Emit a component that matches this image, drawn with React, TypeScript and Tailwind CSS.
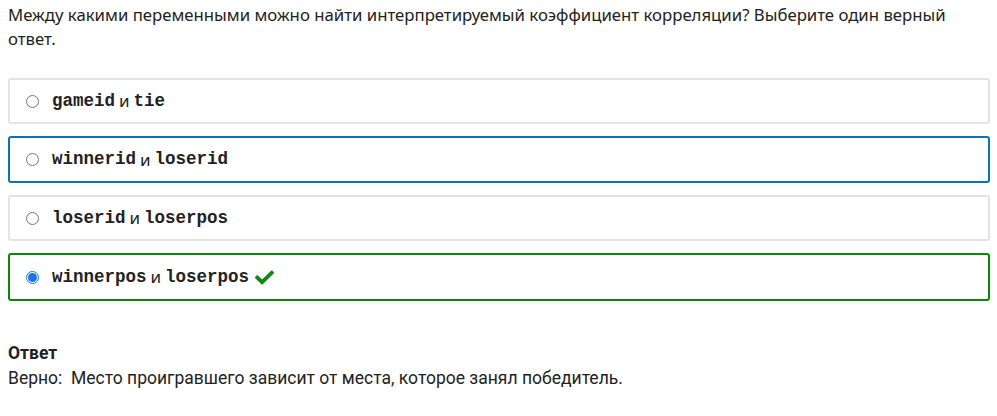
import { FaCheck } from "react-icons/fa";

type Option = {
  left: string;
  right: string;
  state: "idle" | "focus" | "correct";
};

const options: Option[] = [
  { left: "gameid", right: "tie", state: "idle" },
  { left: "winnerid", right: "loserid", state: "focus" },
  { left: "loserid", right: "loserpos", state: "idle" },
  { left: "winnerpos", right: "loserpos", state: "correct" },
];

const borderFor = {
  idle: "h-[46px] border-[#e3e3e3]",
  focus: "h-[47px] border-[#0a72b5]",
  correct: "h-[48px] border-[#0b860b]",
};

const Radio = ({ checked }: { checked: boolean }) =>
  checked ? (
    <span className="flex h-[13px] w-[13px] shrink-0 items-center justify-center rounded-full border border-[#1a73e8] bg-white">
      <span className="h-[9px] w-[9px] rounded-full bg-[#1a73e8]" />
    </span>
  ) : (
    <span className="h-[13px] w-[13px] shrink-0 rounded-full border border-[#767676] bg-white" />
  );

export default function App() {
  return (
    <div className="min-h-[416px] bg-white px-2 pt-[3px] text-[#222] font-['Noto_Sans',sans-serif]">
      <p className="text-[16.75px] leading-6 pr-8">
        Между какими переменными можно найти интерпретируемый коэффициент корреляции? Выберите один верный ответ.
      </p>

      <div className="mt-[27px] flex w-[982px] flex-col gap-3">
        {options.map((o) => (
          <div
            key={o.left}
            className={`flex items-center rounded-[3px] border-2 pl-[16px] ${borderFor[o.state]}`}
          >
            <Radio checked={o.state === "correct"} />
            <span className="ml-[13px] flex items-center text-[17px]">
              <code className="font-['Liberation_Mono',monospace] text-[17.5px] font-bold">{o.left}</code>
              <span className="mx-[4px]">и</span>
              <code className="font-['Liberation_Mono',monospace] text-[17.5px] font-bold">{o.right}</code>
              {o.state === "correct" && <FaCheck className="ml-[6px] text-[19px] text-[#118811]" />}
            </span>
          </div>
        ))}
      </div>

      <div className="mt-[40px] text-[17.5px] leading-[25px] font-['Roboto',sans-serif]">
        <div className="font-bold">Ответ</div>
        <div>Верно:&nbsp; Место проигравшего зависит от места, которое занял победитель.</div>
      </div>
    </div>
  );
}
